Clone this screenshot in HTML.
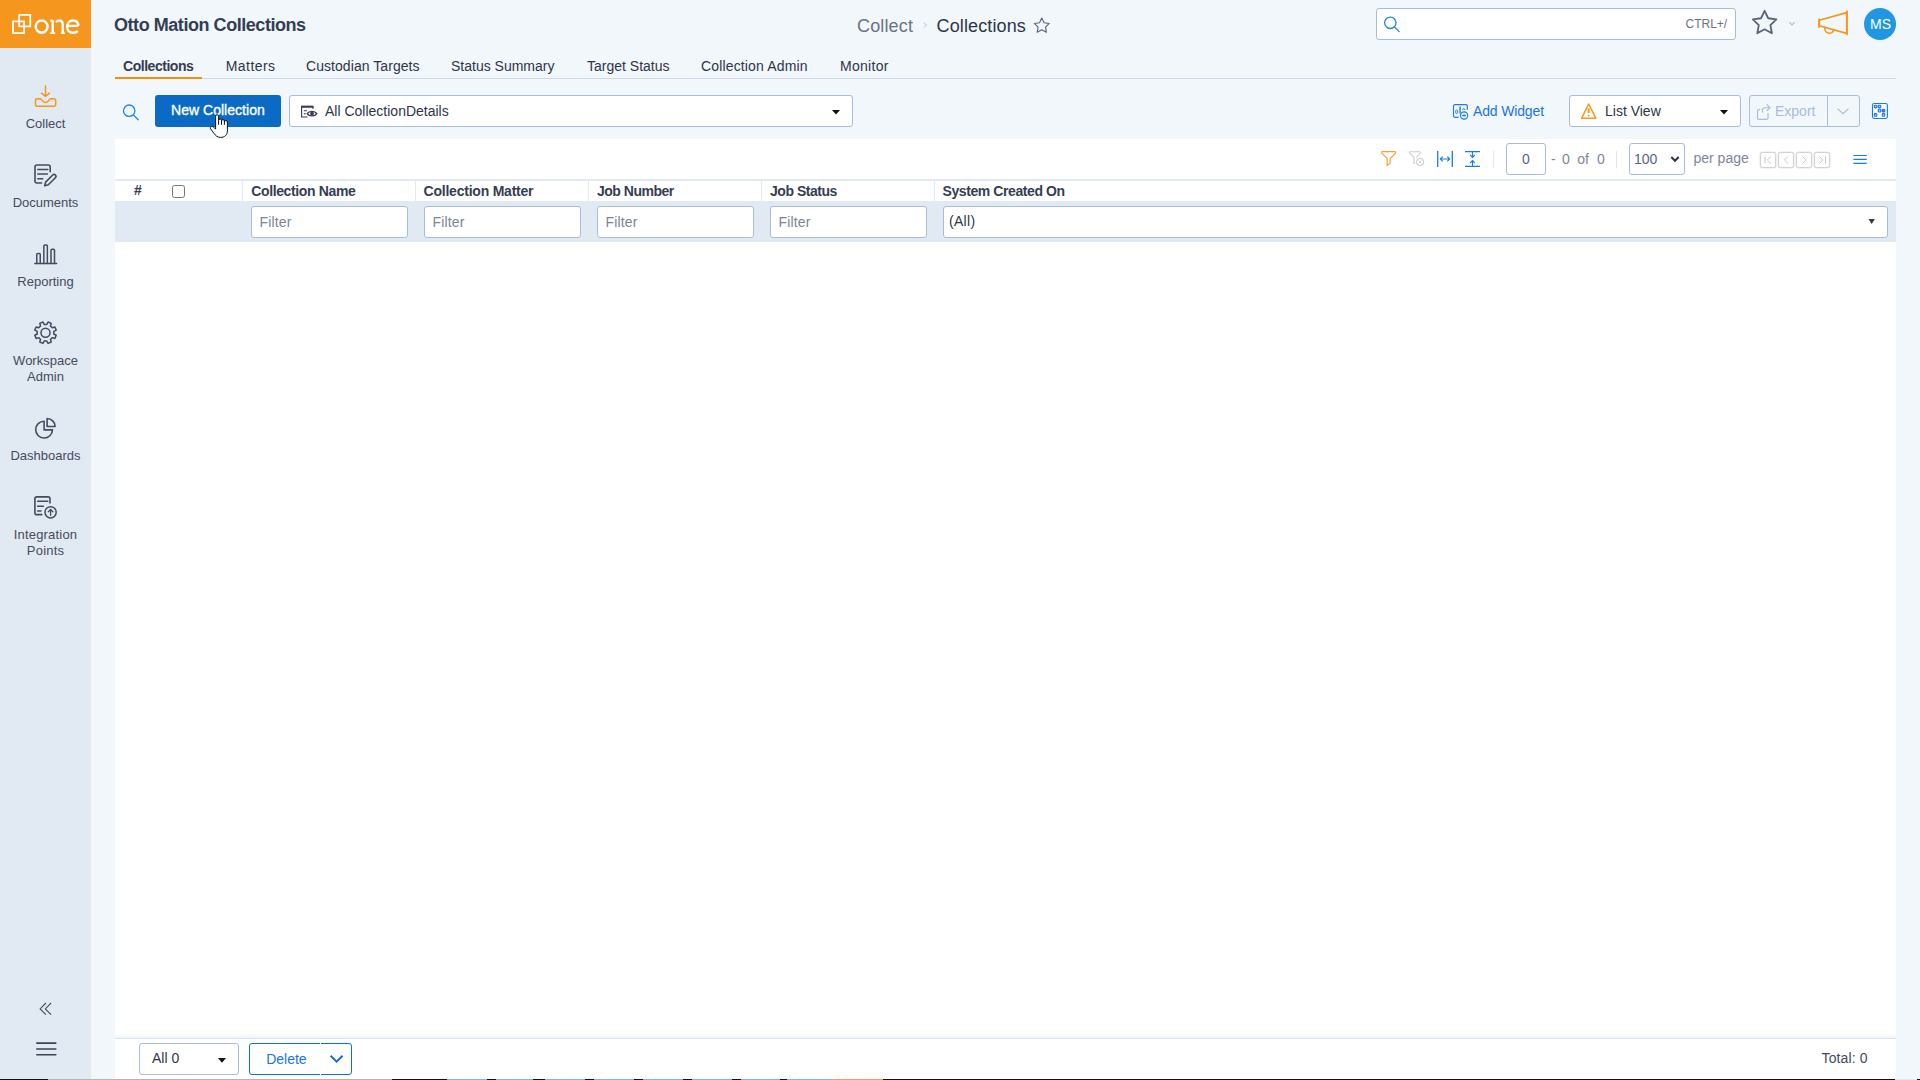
<!DOCTYPE html>
<html>
<head>
<meta charset="utf-8">
<title>Collections</title>
<style>
*{box-sizing:border-box;margin:0;padding:0}
html,body{width:1920px;height:1080px;overflow:hidden}
body{font-family:"Liberation Sans",sans-serif;background:#f2f7fb;color:#2e3547;position:relative;font-size:14px}
#icons{position:absolute;left:0;top:0;pointer-events:none}
.t{position:absolute;white-space:nowrap;line-height:20px;font-size:14px;color:#2e3547}
.b{font-weight:bold;color:#353d53}
#side{position:absolute;left:0;top:0;width:91px;height:1080px;background:#e1e9f3}
#logo{position:absolute;left:0;top:0;width:91px;height:48px;background:#f5961e}
.nav{position:absolute;left:0;width:91px;text-align:center;font-size:13px;line-height:16px;color:#454b5c;white-space:nowrap}
#tabline{position:absolute;left:115px;top:78px;width:1781px;height:1px;background:#cdd8e8}
#tabactive{position:absolute;left:115px;top:77px;width:87px;height:2px;background:#f58f0a}
#newbtn{position:absolute;left:155px;top:95px;width:126px;height:32px;background:#0b6bc4;border-radius:3px}
.box{position:absolute;background:#fff;border:1px solid #a9bcd8;border-radius:3px}
.obox{position:absolute;border:1px solid #a9bcd8;border-radius:3px}
#panel{position:absolute;left:115px;top:139px;width:1781px;height:940px;background:#fff}
#hline{position:absolute;left:115px;top:179px;width:1781px;height:2px;background:#e1e9f3}
#frow{position:absolute;left:115px;top:201px;width:1781px;height:41px;background:#e1e9f3}
.colsep{position:absolute;top:181px;width:1px;height:20px;background:#e1e9f3}
.psep{position:absolute;top:151px;width:1px;height:17px;background:#dfe7f1}
.pnav{position:absolute;top:152px;width:16px;height:16px;border:1px solid #d2d2d2;border-radius:2.5px;background:#fff;box-shadow:0 0 0 .5px #e6e6e6}
#fline{position:absolute;left:115px;top:1038px;width:1781px;height:1px;background:#d9e2ee}
#fshadow{position:absolute;left:115px;top:1033px;width:1781px;height:5px;background:linear-gradient(to bottom,rgba(225,233,243,0),rgba(225,233,243,.45))}
#cb{position:absolute;left:172px;top:185px;width:13px;height:13px;border:1px solid #767676;border-radius:2.5px;background:#fff}
#avatar{position:absolute;left:1864px;top:8px;width:32px;height:32px;border-radius:50%;background:#2196e3}
#taskbar{position:absolute;left:0;top:1079px;width:1920px;height:1px;background:linear-gradient(to right,#111 0 48px,#b4b4b4 48px 392px,#111 392px 447px,#76b9ed 447px 487px,#111 487px 496px,#76b9ed 496px 533px,#111 533px 545px,#76b9ed 545px 585px,#111 585px 594px,#76b9ed 594px 634px,#111 634px 643px,#76b9ed 643px 683px,#111 683px 692px,#76b9ed 692px 732px,#111 732px 741px,#76b9ed 741px 780px,#111 780px 787px,#76b9ed 787px 833px,#f5a04a 833px 883px,#111 883px 1895px,#dfe6ee 1895px 1917px,#111 1917px)}
</style>
</head>
<body>
<div id="side"><div id="logo"></div></div>
<div class="nav" style="top:116px">Collect</div>
<div class="nav" style="top:195px">Documents</div>
<div class="nav" style="top:274px">Reporting</div>
<div class="nav" style="top:353px">Workspace<br>Admin</div>
<div class="nav" style="top:448px">Dashboards</div>
<div class="nav" style="top:527px;letter-spacing:.2px">Integration<br>Points</div>

<div class="t b" style="left:114px;top:15px;font-size:18px;letter-spacing:-.45px">Otto Mation Collections</div>
<div class="t" style="left:857px;top:16px;font-size:18px;color:#6a7282;letter-spacing:.15px">Collect</div>
<div class="t" style="left:936.5px;top:16px;font-size:18px;letter-spacing:.13px">Collections</div>

<div class="box" style="left:1376px;top:8px;width:360px;height:32px"></div>
<div class="t" style="left:1685.5px;top:14px;font-size:12px;color:#6a7282">CTRL+/</div>
<div id="avatar"></div>
<div class="t" style="left:1864px;width:33px;text-align:center;top:14px;font-size:14px;color:#fff">MS</div>

<div id="tabline"></div><div id="tabactive"></div>
<div class="t b" style="left:123px;top:56px;letter-spacing:-.47px">Collections</div>
<div class="t" style="left:225.7px;top:56px;letter-spacing:.45px">Matters</div>
<div class="t" style="left:306px;top:56px;letter-spacing:.06px">Custodian Targets</div>
<div class="t" style="left:451px;top:56px">Status Summary</div>
<div class="t" style="left:587px;top:56px">Target Status</div>
<div class="t" style="left:701px;top:56px;letter-spacing:.15px">Collection Admin</div>
<div class="t" style="left:840px;top:56px;letter-spacing:.28px">Monitor</div>

<div id="newbtn"></div>
<div class="t" style="left:171px;top:100px;color:#fff;-webkit-text-stroke:.35px #fff;letter-spacing:.03px">New Collection</div>
<div class="box" style="left:289px;top:95px;width:564px;height:32px"></div>
<div class="t" style="left:325px;top:101px">All CollectionDetails</div>
<div class="t" style="left:1473px;top:101px;color:#1a73e8;letter-spacing:-.15px">Add Widget</div>
<div class="box" style="left:1569px;top:95px;width:172px;height:32px"></div>
<div class="t" style="left:1605px;top:101px">List View</div>
<div class="obox" style="left:1749px;top:95px;width:111px;height:32px"></div>
<div style="position:absolute;left:1827px;top:96px;width:1px;height:30px;background:#a9bcd8"></div>
<div class="t" style="left:1775px;top:101px;color:#a9bcd8">Export</div>

<div id="panel"></div>
<div id="hline"></div>
<div id="frow"></div>
<div class="psep" style="left:1493px"></div>
<div class="psep" style="left:1616px"></div>
<div class="box" style="left:1506px;top:143px;width:40px;height:32px"></div>
<div class="t" style="left:1506px;width:40px;text-align:center;top:149px;color:#5a6680">0</div>
<div class="t" style="left:1551px;top:149px;color:#7c8699">-</div>
<div class="t" style="left:1562px;top:149px;color:#7c8699">0</div>
<div class="t" style="left:1577.2px;top:149px;color:#7c8699">of</div>
<div class="t" style="left:1597px;top:149px;color:#7c8699">0</div>
<div class="box" style="left:1629px;top:143px;width:56px;height:32px"></div>
<div class="t" style="left:1634px;top:149px;color:#5a6680">100</div>
<div class="t" style="left:1693.5px;top:148px;color:#7c8699">per page</div>
<div class="pnav" style="left:1760px"></div>
<div class="pnav" style="left:1778px"></div>
<div class="pnav" style="left:1796px"></div>
<div class="pnav" style="left:1814px"></div>

<div class="colsep" style="left:242px"></div>
<div class="colsep" style="left:415px"></div>
<div class="colsep" style="left:588px"></div>
<div class="colsep" style="left:761px"></div>
<div class="colsep" style="left:934px"></div>
<div class="t b" style="left:134px;top:180px">#</div>
<div id="cb"></div>
<div class="t b" style="left:251.2px;top:181px;letter-spacing:-.36px">Collection Name</div>
<div class="t b" style="left:423.5px;top:181px;letter-spacing:-.22px">Collection Matter</div>
<div class="t b" style="left:597px;top:181px;letter-spacing:-.5px">Job Number</div>
<div class="t b" style="left:770px;top:181px;letter-spacing:-.47px">Job Status</div>
<div class="t b" style="left:942.5px;top:181px;letter-spacing:-.41px">System Created On</div>
<div class="box" style="left:251px;top:206px;width:157px;height:32px"></div>
<div class="box" style="left:424px;top:206px;width:157px;height:32px"></div>
<div class="box" style="left:597px;top:206px;width:157px;height:32px"></div>
<div class="box" style="left:770px;top:206px;width:157px;height:32px"></div>
<div class="box" style="left:943px;top:206px;width:945px;height:32px"></div>
<div class="t" style="left:259.6px;top:212px;color:#7c8494;letter-spacing:.12px">Filter</div>
<div class="t" style="left:432.6px;top:212px;color:#7c8494;letter-spacing:.12px">Filter</div>
<div class="t" style="left:605.6px;top:212px;color:#7c8494;letter-spacing:.12px">Filter</div>
<div class="t" style="left:778.6px;top:212px;color:#7c8494;letter-spacing:.12px">Filter</div>
<div class="t" style="left:949px;top:211px;letter-spacing:.3px">(All)</div>

<div id="fshadow"></div>
<div id="fline"></div>
<div class="box" style="left:139px;top:1043px;width:100px;height:32px"></div>
<div class="t" style="left:152px;top:1048px">All 0</div>
<div style="position:absolute;left:249px;top:1043px;width:103px;height:32px;border:1px solid #0f6fdb;border-radius:3px;background:#fff"></div>
<div style="position:absolute;left:320px;top:1043px;width:1px;height:32px;background:#fff"></div>
<div class="t" style="left:266.2px;top:1049px;color:#1a73e8">Delete</div>
<div class="t" style="left:1821.5px;top:1048px;color:#454b5c;letter-spacing:.14px">Total: 0</div>
<div id="taskbar"></div>

<svg id="icons" width="1920" height="1080" viewBox="0 0 1920 1080">
<!-- logo -->
<g fill="none" stroke="#fff" stroke-width="1.75">
<rect x="19.15" y="14.9" width="11.1" height="11.5"/>
<rect x="13" y="21.4" width="11" height="11.7"/>
</g>
<g fill="none" stroke="#fff">
<ellipse cx="41.6" cy="26.6" rx="5.9" ry="6.15" stroke-width="2.5"/>
<path d="M52.7 20.3 V33" stroke-width="2.4"/>
<path d="M50 33.2 H55.2 M60.8 33.2 H65" stroke-width="1.6"/><path d="M50.1 20.6 H52.7" stroke-width="2"/>
<path d="M55.9 22.1 C57 21 58 20.5 59.1 20.5 C61.5 20.5 62.75 22.2 62.75 24.8 V33" stroke-width="2.4"/>
<path d="M78.3 25.9 H67.4 M78.3 25.9 C78.3 22.4 76 20.5 72.9 20.5 C69.6 20.5 67.2 23 67.2 26.7 C67.2 30.3 69.6 32.8 73.1 32.8 C75.2 32.8 76.8 32.2 77.7 31" stroke-width="2.4"/>
</g>
<!-- collect -->
<g fill="none" stroke="#f5961e" stroke-width="1.5" stroke-linecap="round" stroke-linejoin="round">
<path d="M45.5 85.9 V96 M41.5 93.2 L45.5 96.3 L49.5 93.2"/>
<path d="M37 98.8 H40.3 C42.2 98.8 42.4 102.6 45.5 102.6 C48.6 102.6 48.8 98.8 50.7 98.8 H54.2 a1.5 1.5 0 0 1 1.5 1.5 V104.7 a1.5 1.5 0 0 1 -1.5 1.5 H37 a1.5 1.5 0 0 1 -1.5 -1.5 V100.3 a1.5 1.5 0 0 1 1.5 -1.5 Z"/>
</g>
<!-- documents -->
<g fill="none" stroke="#454b5c" stroke-width="1.6" stroke-linecap="round" stroke-linejoin="round">
<path d="M50.2 171.8 V167 a2 2 0 0 0 -2 -2 H37 a2 2 0 0 0 -2 2 V181 a2 2 0 0 0 2 2 H41.6"/>
<path d="M37.8 169.4 H47.8 M37.8 173.9 H47.4 M37.8 178.75 H42.8" stroke-width="1.5"/>
<g transform="translate(44.7 185.7) rotate(-45)"><path d="M0 0 L3.2 -1.9 H13.2 a1.9 1.9 0 0 1 0 3.8 H3.2 Z"/></g>
</g>
<!-- reporting -->
<g fill="none" stroke="#454b5c" stroke-width="1.5" stroke-linecap="round" stroke-linejoin="round">
<path d="M34.8 263.5 H56.6"/>
<path d="M36.75 263.5 V254.5 a1 1 0 0 1 1 -1 H39.25 a1 1 0 0 1 1 1 V263.5"/>
<path d="M43.85 263.5 V246 a1 1 0 0 1 1 -1 H46.35 a1 1 0 0 1 1 1 V263.5"/>
<path d="M51 263.5 V250.25 a1 1 0 0 1 1 -1 H53.5 a1 1 0 0 1 1 1 V263.5"/>
</g>
<!-- gear -->
<g fill="none" stroke="#454b5c" stroke-width="1.5" stroke-linejoin="round">
<path d="M46.81 324.40 L48.07 322.00 L51.25 323.32 L50.44 325.90 L52.30 327.76 L54.88 326.95 L56.20 330.13 L53.80 331.39 L53.80 334.01 L56.20 335.27 L54.88 338.45 L52.30 337.64 L50.44 339.50 L51.25 342.08 L48.07 343.40 L46.81 341.00 L44.19 341.00 L42.93 343.40 L39.75 342.08 L40.56 339.50 L38.70 337.64 L36.12 338.45 L34.80 335.27 L37.20 334.01 L37.20 331.39 L34.80 330.13 L36.12 326.95 L38.70 327.76 L40.56 325.90 L39.75 323.32 L42.93 322.00 L44.19 324.40Z"/>
<circle cx="45.5" cy="332.7" r="4.5"/>
</g>
<!-- dashboards -->
<g fill="none" stroke="#454b5c" stroke-width="1.6" stroke-linejoin="round">
<path d="M44.1 421.2 A8.4 8.4 0 1 0 52.5 429.9 H44.1 Z"/>
<path d="M47.1 426.5 V418.5 A8 8 0 0 1 55.1 426.5 Z"/>
</g>
<!-- integration points -->
<g fill="none" stroke="#454b5c" stroke-width="1.6" stroke-linecap="round" stroke-linejoin="round">
<path d="M50 503 V498.9 a2 2 0 0 0 -2 -2 H36.9 a2 2 0 0 0 -2 2 V512.65 a2 2 0 0 0 2 2 H41.8"/>
<path d="M37.6 501.2 H47.8 M37.6 506.3 H43.4 M37.6 510.9 H41" stroke-width="1.5"/>
<circle cx="50.6" cy="512.3" r="5.6" stroke-width="1.5"/>
<path d="M50.6 515.3 V509.6 M48.3 511.7 L50.6 509.4 L52.9 511.7" stroke-width="1.3"/>
</g>
<!-- collapse + hamburger -->
<g fill="none" stroke="#454b5c" stroke-width="1.1">
<path d="M45.9 1003 L40.1 1008.9 L45.9 1014.7 M51.1 1003 L45.3 1008.9 L51.1 1014.7"/>
</g>
<g fill="none" stroke="#3d4354" stroke-width="1.6" stroke-linecap="round">
<path d="M36.8 1043.1 H55.8 M36.8 1049 H55.8 M36.8 1054.8 H55.8"/>
</g>
<!-- breadcrumb sep + star -->
<path d="M923.5 22.6 L926.6 25.1 L923.5 27.6" fill="none" stroke="#c9d3e2" stroke-width="1.1"/>
<path d="M1041.80 18.00 L1044.09 22.74 L1049.31 23.46 L1045.51 27.11 L1046.44 32.29 L1041.80 29.80 L1037.16 32.29 L1038.09 27.11 L1034.29 23.46 L1039.51 22.74Z" fill="none" stroke="#5a6275" stroke-width="1.1" stroke-linejoin="round"/>
<!-- header search -->
<g fill="none" stroke="#1e86e0" stroke-width="1.3" stroke-linecap="round">
<circle cx="1390.3" cy="22.8" r="5.7"/><path d="M1394.5 27 L1399.2 31.6"/>
</g>
<!-- big star + chevron -->
<path d="M1764.60 10.80 L1768.19 18.26 L1776.39 19.37 L1770.40 25.09 L1771.89 33.23 L1764.60 29.30 L1757.31 33.23 L1758.80 25.09 L1752.81 19.37 L1761.01 18.26Z" fill="none" stroke="#5a6275" stroke-width="1.8" stroke-linejoin="round"/>
<path d="M1789.3 22.2 L1792 24.9 L1794.7 22.2" fill="none" stroke="#b4bcc9" stroke-width="1.1"/>
<!-- megaphone -->
<g fill="none" stroke="#f5961e" stroke-width="1.7" stroke-linejoin="round" stroke-linecap="round">
<path d="M1819.3 20.3 L1846.7 12.6 V33.4 L1819.3 25.7 Z"/>
<path d="M1819 19 V27.2 M1847 11.2 V34.6"/>
<path d="M1825 27.5 a4.5 4.5 0 0 0 8.7 2.4"/>
</g>
<!-- toolbar search -->
<g fill="none" stroke="#1e86e0" stroke-width="1.3" stroke-linecap="round">
<circle cx="129.2" cy="110.7" r="5.7"/><path d="M133.4 114.9 L138.2 119.8"/>
</g>
<!-- view dropdown icon -->
<g fill="none" stroke="#3a3850" stroke-width="1.1">
<path d="M301.6 106.2 V117 H307.5"/>
<path d="M301 106.7 H313.2" stroke-width="2.1"/>
<path d="M313 106 V109" />
<path d="M303.8 110.7 H307 M303.8 113.7 H305.8"/>
<path d="M307.2 113.6 C309 110.6 315 110.6 316.8 113.6 C315 116.6 309 116.6 307.2 113.6 Z" stroke-width="1.4"/>
<circle cx="312" cy="113.6" r="1.3" fill="#3a3850"/>
</g>
<path d="M832 110 H840 L836 114.6 Z" fill="#111"/>
<!-- add widget icon -->
<g fill="none" stroke="#1a7be0" stroke-width="1.15" stroke-linejoin="round">
<path d="M1458.6 117.4 H1455 a1.5 1.5 0 0 1 -1.5 -1.5 V106.1 a1.5 1.5 0 0 1 1.5 -1.5 H1465.8 a1.5 1.5 0 0 1 1.5 1.5 V109.8"/>
<rect x="1455.7" y="110.1" width="1.9" height="3.3" rx=".6" stroke-width=".9"/>
<path d="M1460.1 106.6 V113.4" stroke-width="1.4"/>
<path d="M1462.7 110 V109.7 a1 1 0 0 1 2 0 V110" stroke-width="1"/>
<circle cx="1464.1" cy="115.5" r="3.6" fill="#f2f7fb"/>
<path d="M1462.2 115.5 H1466" stroke-width="1.2"/><path d="M1464.1 113.7 V117.3" stroke-width=".8" stroke-opacity=".7"/>
</g>
<!-- warning -->
<g fill="none" stroke="#f5961e" stroke-width="1.5" stroke-linejoin="round" stroke-linecap="butt">
<path d="M1588.7 104 L1595.8 118.2 H1581.7 Z"/>
<path d="M1588.7 108.4 V113" stroke-width="2"/>
<circle cx="1588.7" cy="115.6" r=".55" fill="#f5961e" stroke-width=".9"/>
</g>
<path d="M1720 110 H1728 L1724 114.6 Z" fill="#111"/>
<!-- export icon -->
<g fill="none" stroke="#a9bcd8" stroke-width="1.15" stroke-linejoin="round" stroke-linecap="round">
<path d="M1760 109.6 H1759 a1.5 1.5 0 0 0 -1.5 1.5 V117.9 a1.5 1.5 0 0 0 1.5 1.5 H1766.5 a1.5 1.5 0 0 0 1.5 -1.5 V113.2"/>
<path d="M1762.5 112.2 V110 a2.3 2.3 0 0 1 2.3 -2.3 H1769.6 M1767 104.7 L1770 107.7 L1767 110.7"/>
</g>
<path d="M1837.5 108.6 L1843 113.6 L1848.5 108.6" fill="none" stroke="#a9bcd8" stroke-width="1.2"/>
<!-- grid icon -->
<g fill="#fff" stroke="#1a7be0" stroke-width="1.15">
<rect x="1872.5" y="103.5" width="14.9" height="15" rx="1.9"/>
<g stroke-width="1.1" stroke="#1a73e8"><rect x="1874.3" y="105.2" width="2.6" height="2.7" rx=".8" fill="#b9d6f7"/><rect x="1878.2" y="105.2" width="2.6" height="2.7" rx=".8" fill="#b9d6f7"/><rect x="1878.2" y="109.3" width="2.6" height="2.7" rx=".8" fill="#b9d6f7"/><rect x="1882.2" y="109.3" width="2.6" height="2.7" rx=".8" fill="#3b8ae8"/><rect x="1874.3" y="113.6" width="2.6" height="2.7" rx=".8" fill="#b9d6f7"/><rect x="1882.2" y="113.6" width="2.6" height="2.7" rx=".8" fill="#b9d6f7"/></g>
</g>
<!-- pager icons -->
<path d="M1382.4 151.6 H1394.8 a.9 .9 0 0 1 .7 1.5 L1390.2 158.6 V162.8 L1387.2 165.7 V158.6 L1381.8 153.1 a.9 .9 0 0 1 .6 -1.5 Z" fill="none" stroke="#f5a030" stroke-width="1.15" stroke-linejoin="round"/>
<g fill="none" stroke="#cbccd0" stroke-width="1.05" stroke-linejoin="round">
<path d="M1410.2 151.7 H1419.6 a.8 .8 0 0 1 .6 1.3 L1416.2 157.6 M1415 162.6 L1414 163.5 V157.4 L1409.6 153 a.8 .8 0 0 1 .6 -1.3"/>
<circle cx="1420.1" cy="162" r="3.5"/>
<path d="M1418.6 160.5 L1421.6 163.5 M1421.6 160.5 L1418.6 163.5" stroke-width=".9"/>
</g>
<g fill="none" stroke="#1a7be0" stroke-width="1.3">
<path d="M1437.7 151 V167 M1452.3 151 V167"/>
<path d="M1440.5 159 H1449.5 M1442.7 156.6 L1440.3 159 L1442.7 161.4 M1447.3 156.6 L1449.7 159 L1447.3 161.4" stroke-width="1.1"/>
<path d="M1465 151.7 H1480 M1465 166.3 H1480"/>
<path d="M1472.5 152 V157 M1470.2 155 L1472.5 157.4 L1474.8 155 M1472.5 166 V161 M1470.2 163 L1472.5 160.6 L1474.8 163" stroke-width="1.1"/>
</g>
<path d="M1671.3 157 L1675 160.8 L1678.7 157" fill="none" stroke="#2e3547" stroke-width="2"/>
<g fill="none" stroke="#c8c8c8" stroke-width="1">
<path d="M1765 156.6 V163.4 M1771 156.4 L1767.4 160 L1771 163.6"/>
<path d="M1788 156.4 L1784.4 160 L1788 163.6"/>
<path d="M1802.4 156.4 L1806 160 L1802.4 163.6"/>
<path d="M1819.4 156.4 L1823 160 L1819.4 163.6 M1825.4 156.6 V163.4"/>
</g>
<g stroke="#1a7be0" stroke-width="1.2"><path d="M1853.4 155.5 H1866.8 M1853.4 159.4 H1866.8 M1853.4 163.3 H1866.8"/></g>
<!-- (All) arrow -->
<path d="M1868.6 219 H1874.8 L1871.7 224 Z" fill="#2e3547"/>
<!-- footer -->
<path d="M218 1058 H226 L222 1062.7 Z" fill="#111"/>
<path d="M330.6 1055.8 L336.6 1061.6 L342.6 1055.8" fill="none" stroke="#0f6fdb" stroke-width="2"/>
<!-- cursor -->
<path d="M215.6 116.2 a1.5 1.5 0 0 1 3 0 V120.4 a1.4 1.4 0 0 1 2.9 0 V121 a1.4 1.4 0 0 1 2.9 0 V122 a1.5 1.5 0 0 1 3 0 V131 C227.4 135 224.5 137.4 220.6 137.4 C217.4 137.4 215.6 135.6 214 133.4 L210.6 128.9 C209.8 127.8 210.5 126.6 211.6 126.5 C212.6 126.4 213.4 127 214.2 127.8 L215.6 129 Z" fill="#fff" stroke="#111" stroke-width="1" stroke-linejoin="round"/>
<path d="M218.6 120.4 V124.8 M221.5 121 V124.8 M224.4 122 V124.8" fill="none" stroke="#111" stroke-width="1"/>
</svg>
</body>
</html>
